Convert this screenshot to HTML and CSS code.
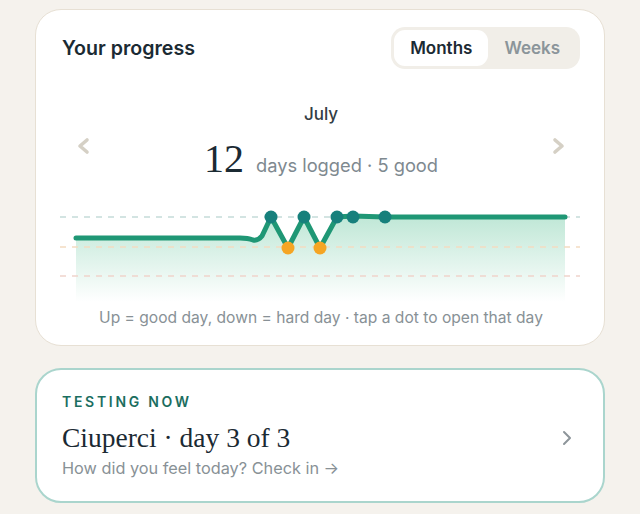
FILE: index.html
```html
<!DOCTYPE html>
<html>
<head>
<meta charset="utf-8">
<link rel="stylesheet" href="styles.css">
</head>
<body>
<div class="page">
  <section class="card progress">
    <div class="head">
      <h2 class="title">Your progress</h2>
      <div class="toggle">
        <span class="seg active">Months</span>
        <span class="seg">Weeks</span>
      </div>
    </div>
    <div class="nav">
      <svg class="chev" width="14" height="18" viewBox="0 0 14 18"><path d="M11 3 L4 9 L11 15" fill="none" stroke="#d5d0c5" stroke-width="3.6" stroke-linecap="round" stroke-linejoin="round"/></svg>
      <div class="period">
        <div class="month">July</div>
        <div class="stats"><span class="num">12</span><span class="desc">days logged · 5 good</span></div>
      </div>
      <svg class="chev" width="14" height="18" viewBox="0 0 14 18"><path d="M3 3 L10 9 L3 15" fill="none" stroke="#d5d0c5" stroke-width="3.6" stroke-linecap="round" stroke-linejoin="round"/></svg>
    </div>
    <svg class="chart" width="520" height="105" viewBox="0 0 520 105">
      <defs>
        <linearGradient id="fill" x1="0" y1="0" x2="0" y2="1">
          <stop offset="0" stop-color="#bfe7d6"/>
          <stop offset="1" stop-color="#ffffff"/>
        </linearGradient>
      </defs>
      <path d="M16 38 L180 38 Q188 38 193 40 Q198 41 202 36 L211 17 L228 48 L244 17 L260 48 L277 17 L293 16 L325 17 L505 17 L505 102 L16 102 Z" fill="url(#fill)"/>
      <line x1="0" y1="17" x2="520" y2="17" stroke="#c5dbd9" stroke-width="1.3" stroke-dasharray="6 6"/>
      <line x1="0" y1="47" x2="520" y2="47" stroke="#f3dcc1" stroke-width="1.3" stroke-dasharray="6 6"/>
      <line x1="0" y1="76" x2="520" y2="76" stroke="#f0d4cc" stroke-width="1.3" stroke-dasharray="6 6"/>
      <path d="M16 38 L180 38 Q188 38 193 40 Q198 41 202 36 L211 17 L228 48 L244 17 L260 48 L277 17 L293 16 L325 17 L505 17" fill="none" stroke="#1f9775" stroke-width="5" stroke-linecap="round" stroke-linejoin="round"/>
      <circle cx="211" cy="17" r="6.5" fill="#17807c"/>
      <circle cx="228" cy="48" r="6.5" fill="#f5a524"/>
      <circle cx="244" cy="17" r="6.5" fill="#17807c"/>
      <circle cx="260" cy="48" r="6.5" fill="#f5a524"/>
      <circle cx="277" cy="17" r="6.5" fill="#17807c"/>
      <circle cx="293" cy="17" r="6.5" fill="#17807c"/>
      <circle cx="325" cy="17" r="6.5" fill="#17807c"/>
    </svg>
    <p class="caption">Up = good day, down = hard day · tap a dot to open that day</p>
  </section>

  <section class="card testing">
    <div class="testing-body">
      <div class="eyebrow">TESTING NOW</div>
      <div class="food">Ciuperci · day 3 of 3</div>
      <div class="prompt">How did you feel today? Check in →</div>
    </div>
    <svg class="go" width="12" height="18" viewBox="0 0 12 18"><path d="M3 3 L9 9 L3 15" fill="none" stroke="#8d959a" stroke-width="2" stroke-linecap="round" stroke-linejoin="round"/></svg>
  </section>
</div>
</body>
</html>
```

FILE: styles.css
```css
* { box-sizing: border-box; }
html, body { margin: 0; padding: 0; }
body {
  background: #f5f2ed;
  font-family: Inter, "Noto Sans", sans-serif;
  color: #1c2a33;
}
.page {
  padding: 9px 35px 0;
  display: flex;
  flex-direction: column;
  gap: 22px;
}
.card {
  background: #fff;
  border-radius: 26px;
}
.progress {
  border: 1px solid #e7e0d4;
  padding: 17px 24px 17px 26px;
  display: flex;
  flex-direction: column;
}
.head {
  display: flex;
  justify-content: space-between;
  align-items: center;
}
.title {
  margin: 0;
  font-size: 19.6px;
  font-weight: 600;
  color: #1b2a33;
}
.toggle {
  display: flex;
  background: #f1eee8;
  border-radius: 14px;
  padding: 3px;
  height: 42px;
}
.seg {
  display: flex;
  align-items: center;
  padding: 0 16px;
  font-size: 17px;
  font-weight: 600;
  color: #8b959a;
  border-radius: 11px;
}
.seg.active {
  background: #fff;
  color: #1b2a33;
}
.seg + .seg { padding-right: 17px; }
.nav {
  margin-top: 34px;
  display: flex;
  align-items: center;
  justify-content: space-between;
  padding: 0 14px;
}
.chev { margin-top: 10px; }
.period {
  display: flex;
  flex-direction: column;
  align-items: center;
}
.month {
  font-size: 17px;
  font-weight: 500;
  line-height: 22px;
  color: #333d44;
}
.stats {
  margin-top: 14px;
  height: 40px;
  display: flex;
  align-items: baseline;
  gap: 12px;
}
.num {
  font-family: "Liberation Serif", "DejaVu Serif", serif;
  font-size: 40px;
  line-height: 40px;
  color: #1b2a33;
}
.desc {
  font-size: 18.3px;
  color: #7e898f;
}
.chart {
  display: block;
  margin: 21px 0 0 -2px;
}
.caption {
  margin: 3px 0 0;
  text-align: center;
  font-size: 15.6px;
  line-height: 20px;
  color: #889196;
}
.testing {
  border: 2px solid #aad5cd;
  padding: 23px 30px 22px 25px;
  display: flex;
  align-items: center;
  justify-content: space-between;
}
.eyebrow {
  font-size: 14px;
  line-height: 18px;
  font-weight: 600;
  letter-spacing: 2.7px;
  color: #1b6e60;
}
.food {
  margin-top: 10px;
  font-family: "Liberation Serif", "DejaVu Serif", serif;
  font-size: 27.5px;
  line-height: 33px;
  color: #1b2a33;
}
.prompt {
  margin-top: 3px;
  font-size: 16.3px;
  line-height: 22px;
  color: #889196;
}
.go { margin-top: 4px; }
```
